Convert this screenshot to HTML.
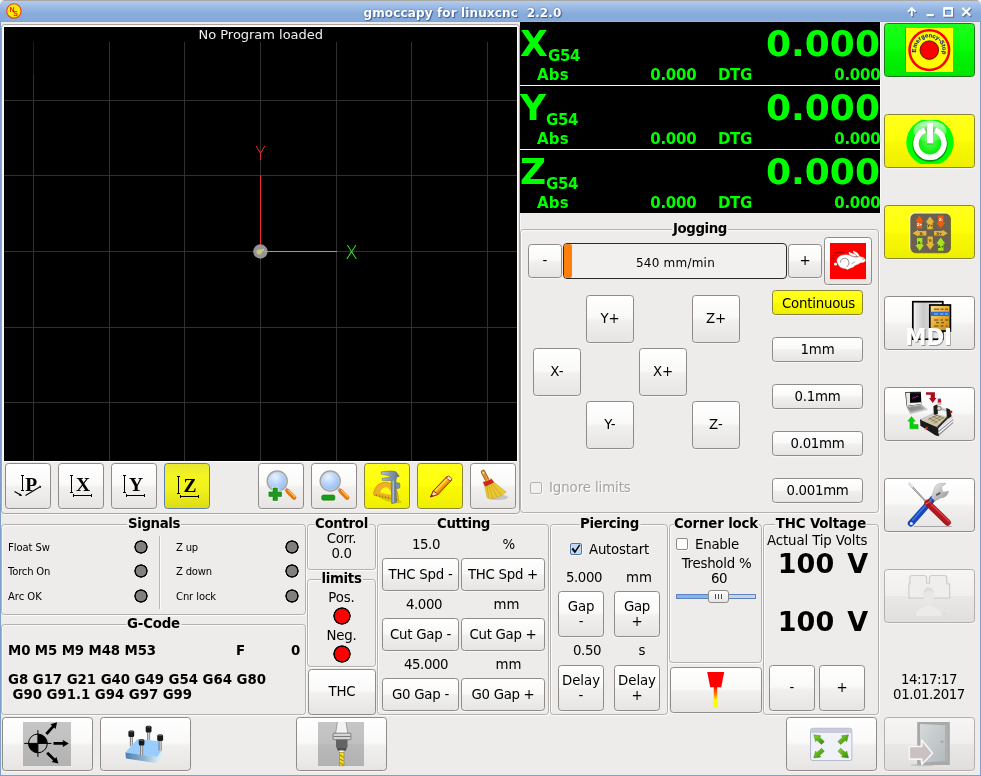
<!DOCTYPE html>
<html lang="en"><head><meta charset="utf-8"><title>gmoccapy for linuxcnc 2.2.0</title>
<style>
html,body{margin:0;padding:0}
body{width:981px;height:776px;background:#edeceb;position:relative;overflow:hidden;font-family:"DejaVu Sans","Liberation Sans",sans-serif;font-size:13.33px;letter-spacing:-.1px;color:#000;line-height:16px}
.a{position:absolute;white-space:nowrap}
.c{position:absolute;white-space:nowrap;text-align:center}
.b{position:absolute;box-sizing:border-box;border:1px solid #8f8b88;border-radius:3.5px;background:linear-gradient(#ffffff 0%,#f9f9f8 47%,#f1f0ef 53%,#e6e5e4 100%);box-shadow:0 1px 0 rgba(255,255,255,.6);display:flex;align-items:center;justify-content:center;text-align:center;white-space:nowrap}
.b.y{background:linear-gradient(#ffff1c 0%,#ffff0a 48%,#f9f906 54%,#eeee00 100%);border-color:#8a8637}
.b.g{background:linear-gradient(#1cff1c 0%,#08fc08 48%,#04f504 54%,#00e600 100%);border-color:#1c7a1c}
.b.d{background:linear-gradient(#f6f5f5 0%,#f0efee 49%,#e9e8e7 51%,#e0dfde 100%);border-color:#b3afac}
.f{position:absolute;box-sizing:border-box;border:1px solid #b3b0ad;border-radius:3.5px;box-shadow:inset 1px 1px 0 #fbfbfb,1px 1px 0 #fbfbfb}
.t{position:absolute;white-space:nowrap;font-weight:bold;background:#edeceb;height:16px;line-height:16px;top:516px;padding:0 1px;letter-spacing:-.33px;transform:translateX(-50%)}
.led{position:absolute;width:14px;height:14px;border-radius:50%;background:radial-gradient(circle at 50% 50%,#808080 0,#808080 4.900px,#000 5.600px,#000 6.400px,rgba(0,0,0,0) 7px)}
.led.r{width:18px;height:18px;background:radial-gradient(circle at 50% 50%,#ff0000 0,#ff0000 6.900px,#000 7.600px,#000 8.400px,rgba(0,0,0,0) 9px)}
.s{font-size:10px;letter-spacing:.06px}
.dro{letter-spacing:0;position:absolute;left:520px;width:360px;height:63px;background:#000;color:#00ff00;font-weight:bold;overflow:hidden}
.dro div{position:absolute;white-space:nowrap}
.dro .L{font-size:36px;line-height:42px;left:0;top:1px}
.dro .G{font-size:15px;line-height:18px;top:25px}
.dro .A{font-size:15px;line-height:18px;top:44px;left:17px}
.dro .V{font-size:15px;line-height:18px;top:44px;right:183.700px}
.dro .D{font-size:15px;line-height:18px;top:44px;left:198px}
.dro .W{font-size:15px;line-height:18px;top:44px;right:-.3px}
.dro .B{font-size:36px;line-height:42px;right:0px;top:1px}
svg{position:absolute;overflow:visible}
#w{position:absolute;left:0;top:0;width:981px;height:776px;will-change:transform}
</style></head><body><div id="w">
<!-- title bar -->
<div class="a" style="left:0;top:0;width:981px;height:776px;background:#7f9fcc"></div>
<div class="a" style="left:0;top:0;width:981px;height:6px;background:#f4f4f4"></div><div class="a" style="left:0;top:0;width:981px;height:22px;background:linear-gradient(#aaa6a2 0,#aaa6a2 1px,#b1ccee 1px,#a3c0e7 5px,#93b4e0 10px,#86aada 14.500px,#86aada 21px,#7ca3db 21px);border-radius:5px 5px 0 0"></div><div class="a" style="left:520px;top:21px;width:360px;height:1px;background:#8fb5ea"></div>
<div class="a" style="left:1px;top:22px;width:979px;height:753px;background:#edeceb"></div>
<svg style="left:5px;top:2px" width="18" height="18" viewBox="0 0 18 18"><circle cx="8.900" cy="8.900" r="7.200" fill="#ffee00" stroke="#f0401c" stroke-width="1.100"></circle><g font-family="Liberation Sans,sans-serif" font-weight="bold" fill="#f01414"><text x="4.500" y="10" font-size="7">N</text><text x="8.300" y="13.800" font-size="7">S</text></g></svg>
<div class="c nls" style="left:262.500px;top:5px;width:400px;font-weight:bold;font-size:12px;letter-spacing:.14px;color:#fff;text-shadow:1px 1px 1px #3f5f90,0 0 2px #5577a8;white-space:pre">gmoccapy for linuxcnc  2.2.0</div>
<svg style="left:905px;top:4px" width="72" height="16" viewBox="0 0 72 16" fill="none"><defs><g id="wc" stroke-width="1.900"><path d="M6.800 12.300V4.800M3 7.800L6.800 4L10.600 7.800"></path><path d="M21.500 11.200h7.300" stroke-width="2.200"></path><rect x="39.200" y="4.200" width="8" height="7.600"></rect><path d="M39.200 4.500h8" stroke-width="2.400"></path><path d="M57.300 3.800l8 8M65.300 3.800l-8 8" stroke-width="2.100"></path></g></defs><use href="#wc" stroke="#4c6c9e" transform="translate(1 1)"></use><use href="#wc" stroke="#fff"></use></svg>
<!-- preview frame -->
<div class="a" style="left:1px;top:24px;width:519px;height:490px;box-sizing:border-box;border:1px solid #a8a4a1;border-radius:3.500px;box-shadow:inset 1px 1px 0 #f6f5f4,1px 1px 0 #f8f8f7"></div><div class="a" style="left:3px;top:26px;width:515px;height:436px;background:#fff"></div>
<div class="a" style="left:4px;top:27px;width:513px;height:434px;background:#000"></div>
<svg style="left:4px;top:27px" width="513" height="434" viewBox="4 27 513 434" shape-rendering="crispEdges">
<g stroke="#303030" stroke-width="1" fill="none">
<path d="M33.5 42V461M109.5 42V461M184.5 42V461M260.5 42V461M336.5 42V461M411.5 42V461M487.5 42V461"></path>
<path d="M4 100.5H517M4 175.5H517M4 251.5H517M4 327.5H517M4 402.5H517"></path>
</g>
<path d="M33.5 42V75" stroke="#1c1c1c" fill="none"></path>
<g shape-rendering="auto" fill="none" stroke-width="1">
<path d="M260.5 175.5V251" stroke="#f02a2a"></path>
<text x="260.400" y="159.600" text-anchor="middle" font-family="DejaVu Sans Light,DejaVu Sans,Liberation Sans,sans-serif" font-weight="200" font-size="18.600" fill="#ff3030" transform="translate(260.400 0) scale(.92 1) translate(-260.400 0)">Y</text>
<path d="M261 251.5H337" stroke="#22ee22"></path>
<text x="351.400" y="259" text-anchor="middle" font-family="DejaVu Sans Light,DejaVu Sans,Liberation Sans,sans-serif" font-weight="200" font-size="20" fill="#28f828" transform="translate(351.400 0) scale(.92 1) translate(-351.400 0)">X</text>
<circle cx="260.4" cy="251.5" r="7.2" fill="#a0a0a0" fill-opacity="0.93" stroke="none"></circle>
<path d="M256.5 251.5c0-1.6 1.6-2 3-2l3.5-.6c1-.2 1.600.6 1 1.400l-1.800 1.200c-.3 2-1.200 3-3.200 3c-1.600 0-2.500-1.200-2.500-3z" fill="#c8c878" stroke="none"></path>
</g>
</svg>
<div class="c" style="left: 4px; top: 27px; width: 513.5px; color: rgb(240, 240, 240); line-height: 15px; font-size: 13px; letter-spacing: -0.02px;">No Program loaded</div>
<!-- toolbar under preview -->
<div class="b" style="left:5px;top:463px;width:46px;height:46px"><svg style="left:0;top:0" width="44" height="44" viewBox="6 464 44 44"><text x="25.200" y="491" font-family="Liberation Serif,serif" font-weight="bold" font-size="19.500" fill="#000">P</text><path d="M22.500 475.500V490.500M21 475.500h3M21 490.500h3" stroke="#000" stroke-width="1" fill="none"></path><path d="M14.500 491.500L21.500 495.500M25.500 495.500L40.500 486.500" stroke="#000" stroke-width="1.100" fill="none"></path><path d="M19.800 493.200l2.200 2.800l-3.200-.6zM39.200 485.500l2 .8l-.6 2z" fill="#000"></path></svg></div>
<div class="b" style="left:58px;top:463px;width:46px;height:46px"><svg style="left:0;top:0" width="44" height="44" viewBox="59 464 44 44"><text x="76" y="491" font-family="Liberation Serif,serif" font-weight="bold" font-size="19.500" fill="#000">X</text><path d="M71.500 475.500V492.500M70 475.500h3M70 492.500h3M73.500 495.500H91.500M73.500 494v3M91.500 494v3" stroke="#000" stroke-width="1" fill="none"></path></svg></div>
<div class="b" style="left:111px;top:463px;width:46px;height:46px"><svg style="left:0;top:0" width="44" height="44" viewBox="112 464 44 44"><text x="129" y="491" font-family="Liberation Serif,serif" font-weight="bold" font-size="19.500" fill="#000">Y</text><path d="M124.500 475.500V492.500M123 475.500h3M123 492.500h3M126.500 495.500H144.500M126.500 494v3M144.500 494v3" stroke="#000" stroke-width="1" fill="none"></path></svg></div>
<div class="b" style="left:164px;top:463px;width:46px;height:46px;background:linear-gradient(#e8e830 0%,#f4f420 30%,#f0f01c 60%,#dcdc14 100%);border-color:#5d7fb1"><svg style="left:0;top:0" width="44" height="44" viewBox="164 463 44 44"><text x="182.500" y="491" font-family="Liberation Serif,serif" font-weight="bold" font-size="19.500" fill="#000">Z</text><path d="M177.500 475.500V492.500M176 475.500h3M176 492.500h3M179.500 495.500H197.500M179.500 494v3M197.500 494v3" stroke="#000" stroke-width="1" fill="none"></path></svg></div>
<div class="b" style="left:258px;top:463px;width:46px;height:46px" id="zin"><svg style="left:0;top:0" width="44" height="44" viewBox="259 464 44 44"><defs><radialGradient id="lens" cx=".4" cy=".3" r=".8"><stop offset="0" stop-color="#e8f2ff"></stop><stop offset=".6" stop-color="#a9cbfb"></stop><stop offset="1" stop-color="#8ab6f6"></stop></radialGradient><linearGradient id="hnd" x1="0" y1="0" x2="1" y2="0" gradientTransform="rotate(-45 .5 .5)"><stop offset="0" stop-color="#ffc070"></stop><stop offset=".5" stop-color="#f58a1f"></stop><stop offset="1" stop-color="#d86a08"></stop></linearGradient></defs><path d="M285.4 488.8L288.2 491.6" stroke="#b0b0b0" stroke-width="3.400"></path><path d="M287.7 491.1L294.2 497.6" stroke="#e8760c" stroke-width="4.400" stroke-linecap="round"></path><path d="M288.4 490.4L294.8 496.8" stroke="#ffc46a" stroke-width="1.300" stroke-linecap="round"></path><circle cx="277.2" cy="481.0" r="9.900" fill="url(#lens)" stroke="#a2a2a2" stroke-width="1.700"></circle><circle cx="277.2" cy="481.0" r="9" fill="none" stroke="#d8d8d8" stroke-width=".6"></circle><path d="M273.0 487.9h4.400v4.100h4.100v4.400h-4.100v4.100h-4.400v-4.100h-4.100v-4.400h4.100z" fill="#1d9a1d" stroke="#eaf6e6" stroke-width="2.400" stroke-linejoin="round"></path><path d="M273.0 487.9h4.400v4.100h4.100v4.400h-4.100v4.100h-4.400v-4.100h-4.100v-4.400h4.100z" fill="#1d9a1d" stroke="#167a16" stroke-width=".6" stroke-linejoin="round"></path></svg></div>
<div class="b" style="left:311px;top:463px;width:46px;height:46px" id="zout"><svg style="left:0;top:0" width="44" height="44" viewBox="312 464 44 44"><path d="M338.4 488.8L341.2 491.6" stroke="#b0b0b0" stroke-width="3.400"></path><path d="M340.7 491.1L347.2 497.6" stroke="#e8760c" stroke-width="4.400" stroke-linecap="round"></path><path d="M341.4 490.4L347.8 496.8" stroke="#ffc46a" stroke-width="1.300" stroke-linecap="round"></path><circle cx="330.2" cy="481.0" r="9.900" fill="url(#lens)" stroke="#a2a2a2" stroke-width="1.700"></circle><circle cx="330.2" cy="481.0" r="9" fill="none" stroke="#d8d8d8" stroke-width=".6"></circle><rect x="321.7" y="495.0" width="13.200" height="5.200" rx="1.500" fill="#1d9a1d" stroke="#eaf6e6" stroke-width="2.200"></rect><rect x="321.7" y="495.0" width="13.200" height="5.200" rx="1.500" fill="#1d9a1d" stroke="#167a16" stroke-width=".6"></rect></svg></div>
<div class="b y" style="left:364px;top:463px;width:46px;height:46px" id="dim"><svg style="left:0;top:0" width="44" height="44" viewBox="365 464 44 44"><defs><linearGradient id="cal" x1="0" y1="0" x2="1" y2="0"><stop offset="0" stop-color="#b8c6d6"></stop><stop offset=".5" stop-color="#8598ae"></stop><stop offset="1" stop-color="#5f738c"></stop></linearGradient></defs><ellipse cx="390.5" cy="499.5" rx="11.500" ry="2.500" fill="#8a8a00" opacity=".35" transform="rotate(14 390.5 499.5)"></ellipse><path d="M373.6 493.1Q375.8 482.0 387.0 482.0Q397.2 485.5 398.4 497.7L398.1 500.4L374.0 495.3Z" fill="#eeb024" stroke="#c88a10" stroke-width=".7"></path><path d="M380.1 492.8Q381.3 487.3 386.6 487.3Q391.1 489.1 391.5 495.0Z" fill="#fafa10"></path><path d="M376.4 494.0v2M379.5 494.8v2M382.5 495.4v2M385.6 496.1v2M388.6 496.7v2M396.6 498.4v2" stroke="#8a5a08" stroke-width=".6"></path><polygon points="381.3,471.8 391.7,471.0 396.0,471.8 399.3,476.3 396.6,477.2 396.0,480.0 396.3,502.6 391.7,503.6 391.2,480.6 382.2,480.3 382.2,478.4 390.5,477.2 389.5,475.7 381.3,474.0" fill="url(#cal)" stroke="#5a6c82" stroke-width=".6"></polygon><path d="M393.2 480.6V502.4" stroke="#c9d4e0" stroke-width=".9"></path><rect x="395.4" y="482.8" width="4.500" height="5.600" rx="1.500" fill="#7d90a6" stroke="#5a6c82" stroke-width=".5"></rect></svg></div>
<div class="b y" style="left:417px;top:463px;width:46px;height:46px" id="pen"><svg style="left:0;top:0" width="44" height="44" viewBox="418 464 44 44"><polygon points="430.6,496.9 433.3,491.0 446.7,476.7 451.6,480.0 438.2,494.3" fill="#f9a70a" stroke="#a01414" stroke-width="1"></polygon><polygon points="430.6,496.9 433.3,491.0 438.2,494.3" fill="#f6dcae" stroke="#a01414" stroke-width=".8"></polygon><polygon points="430.6,496.9 431.6,494.8 433.3,495.7" fill="#3a1a1a"></polygon><path d="M435.1 491.0L448.6 477.5" stroke="#ffd24a" stroke-width="1.800"></path><path d="M437.6 493.4L450.8 480.0" stroke="#e07a00" stroke-width="1.200"></path><ellipse cx="449.3" cy="478.4" rx="2.800" ry="1.700" transform="rotate(35 449.3 478.4)" fill="#f4e8e0" stroke="#a01414" stroke-width=".7"></ellipse></svg></div>
<div class="b" style="left:470px;top:463px;width:46px;height:46px" id="broom"><svg style="left:0;top:0" width="44" height="44" viewBox="471 464 44 44"><ellipse cx="497.5" cy="497.2" rx="10.500" ry="2.800" fill="#000" opacity=".16"></ellipse><polygon points="484.6,485.5 492.8,481.3 506.1,492.0 501.2,495.7 496.3,497.5 491.4,499.0 487.1,497.7" fill="#e9c834" stroke="#c8a018" stroke-width=".5"></polygon><path d="M487.1 485.9L488.7 497.5M488.7 485.0L492.6 498.1M490.2 484.0L496.9 496.9M491.4 483.1L501.2 495.0" stroke="#b89010" stroke-width=".6" opacity=".8"></path><path d="M483.1 472.0L487.7 481.0" stroke="#a86a18" stroke-width="4.600" stroke-linecap="round"></path><path d="M483.1 472.0L487.7 481.0" stroke="#d89a40" stroke-width="2.600" stroke-linecap="round"></path><circle cx="483.4" cy="472.8" r=".9" fill="#f4f0e8"></circle><polygon points="483.1,482.2 491.4,478.9 493.6,482.2 485.3,486.2" fill="#d82020" stroke="#a81010" stroke-width=".5"></polygon><path d="M482.8 482.0L491.4 478.7" stroke="#f0c030" stroke-width=".9"></path></svg></div>
<!-- DRO -->
<div class="a" style="left:520px;top:22px;width:361px;height:191px;background:#f4f4f4"></div>
<div class="dro" style="top:22px"><div class="L" style="letter-spacing: 0.244px;">X</div><div class="G" style="left: 28px; letter-spacing: -0.395px;">G54</div><div class="A" style="letter-spacing: 0.242px;">Abs</div><div class="V" style="letter-spacing: -0.289px;">0.000</div><div class="D" style="letter-spacing: -0.332px;">DTG</div><div class="W" style="letter-spacing: -0.289px;">0.000</div><div class="B" style="letter-spacing: 0.026px;">0.000</div></div>
<div class="dro" style="top:86px"><div class="L" style="letter-spacing: -0.068px;">Y</div><div class="G" style="left: 26px; letter-spacing: -0.395px;">G54</div><div class="A" style="letter-spacing: 0.242px;">Abs</div><div class="V" style="letter-spacing: -0.289px;">0.000</div><div class="D" style="letter-spacing: -0.332px;">DTG</div><div class="W" style="letter-spacing: -0.289px;">0.000</div><div class="B" style="letter-spacing: 0.026px;">0.000</div></div>
<div class="dro" style="top:150px"><div class="L" style="letter-spacing: -0.104px;">Z</div><div class="G" style="left: 26px; letter-spacing: -0.395px;">G54</div><div class="A" style="letter-spacing: 0.242px;">Abs</div><div class="V" style="letter-spacing: -0.289px;">0.000</div><div class="D" style="letter-spacing: -0.332px;">DTG</div><div class="W" style="letter-spacing: -0.289px;">0.000</div><div class="B" style="letter-spacing: 0.026px;">0.000</div></div>
<!-- Jogging -->
<div class="f" style="left:520px;top:229px;width:359px;height:284px"></div>
<div class="t" style="left: 700px; top: 221px; letter-spacing: -0.4px;">Jogging</div>
<div class="b" style="left: 528px; top: 244px; width: 34px; height: 34px; letter-spacing: 0.19px;">-</div>
<div class="a" style="left:563px;top:243px;width:224px;height:36px;box-sizing:border-box;border:1px solid #2a2a2a;border-radius:4px;background:#f1f0ef;overflow:hidden"><div class="a" style="left:0;top:0;width:8px;height:34px;background:#ff7f0e;border-radius:3px 2px 2px 3px"></div></div>
<div class="c" style="left: 563.5px; top: 255px; width: 224px; font-size: 12px; letter-spacing: 0.223px;">540 mm/min</div>
<div class="b" style="left: 788px; top: 244px; width: 34px; height: 34px; letter-spacing: -0.169px;">+</div>
<div class="b" style="left:824px;top:237px;width:48px;height:48px" id="rabbit"><svg style="left:0;top:0" width="46" height="46" viewBox="825 238 46 46"><rect x="830" y="243" width="36" height="36" fill="#ff0000"></rect><path d="M834.3 253.0Q839.7 252.3 844.8 252.8M831.4 256.1Q835.1 255.3 838.2 255.7M830.7 259.1Q832.8 258.6 834.7 258.4" stroke="#8a0000" stroke-width=".9" fill="none" opacity=".85"></path><path d="M837.0 260.9Q837.4 255.5 844.4 254.9Q849.0 254.6 852.1 256.7Q856.7 257.8 859.4 256.7Q864.5 256.7 865.6 260.5Q864.5 262.8 860.6 262.5Q858.3 264.4 855.2 265.2Q853.6 267.5 850.5 267.9L847.5 269.4L845.5 268.6L842.0 268.0Q838.2 266.3 837.0 260.9Z" fill="#fff" stroke="#e8f4f4" stroke-width=".5"></path><ellipse cx="835.5" cy="264.0" rx="1.700" ry="1.500" fill="#fff"></ellipse><path d="M852.1 256.7Q847.5 253.2 849.0 252.0Q853.6 253.2 856.7 256.7Z" fill="#fff"></path><path d="M855.2 256.3Q852.1 251.6 853.6 250.7Q858.3 252.4 859.7 256.7Z" fill="#fff"></path><path d="M840.5 262.5Q840.1 258.6 845.1 258.2Q849.0 259.0 849.0 262.5Q848.6 265.5 846.7 267.1" stroke="#3a3a3a" stroke-width=".55" fill="none"></path><path d="M850.5 255.5Q853.6 257.0 858.3 256.7M852.9 252.4L857.5 256.3M851.3 264.0L855.2 261.7" stroke="#555" stroke-width=".5" fill="none"></path><circle cx="863.1" cy="259.0" r=".6" fill="#444"></circle></svg></div>
<div class="b" style="left: 586px; top: 295px; width: 48px; height: 48px; letter-spacing: -0.156px;">Y+</div>
<div class="b" style="left: 692px; top: 295px; width: 48px; height: 48px; letter-spacing: -0.15px;">Z+</div>
<div class="b" style="left: 533px; top: 348px; width: 48px; height: 48px; letter-spacing: 0.029px;">X-</div>
<div class="b" style="left: 639px; top: 348px; width: 48px; height: 48px; letter-spacing: -0.15px;">X+</div>
<div class="b" style="left: 586px; top: 401px; width: 48px; height: 48px; letter-spacing: 0.024px;">Y-</div>
<div class="b" style="left: 692px; top: 401px; width: 48px; height: 48px; letter-spacing: 0.029px;">Z-</div>
<div class="b y" style="left: 772px; top: 290px; width: 91px; height: 25px; padding: 2px 0px 0px 2px; letter-spacing: -0.229px;">Continuous</div>
<div class="b" style="left: 772px; top: 337px; width: 91px; height: 25px; letter-spacing: -0.15px;">1mm</div>
<div class="b" style="left: 772px; top: 384px; width: 91px; height: 25px; letter-spacing: -0.234px;">0.1mm</div>
<div class="b" style="left: 772px; top: 431px; width: 91px; height: 25px; letter-spacing: -0.275px;">0.01mm</div>
<div class="b" style="left: 772px; top: 478px; width: 91px; height: 25px; letter-spacing: -0.304px;">0.001mm</div>
<div class="a" style="left:530px;top:482px;width:12px;height:12px;box-sizing:border-box;border:1px solid #b5b2af;border-radius:2px;background:#f1f0ef;box-shadow:1px 1px 0 #fbfbfb"></div>
<div class="a" style="left: 549px; top: 480px; color: rgb(166, 164, 161); text-shadow: rgb(255, 255, 255) 1px 1px 0px; letter-spacing: -0.091px;">Ignore limits</div>
<!-- right column -->
<div class="a" style="left:880px;top:22px;width:1px;height:191px;background:#fbfbfb"></div>
<div class="b g" style="left:884px;top:23px;width:91px;height:54px" id="estop"><svg style="left:0;top:0" width="89" height="52" viewBox="885 24 89 52"><rect x="905" y="28" width="48" height="44" fill="#ffff00"></rect><rect x="905" y="28" width="0.8" height="44" fill="#6b6b00"></rect><circle cx="929.3" cy="50.1" r="19.8" fill="none" stroke="#ff0000" stroke-width="2.5"></circle><circle cx="929.3" cy="50.1" r="9.3" fill="#ff0000" stroke="#200000" stroke-width="0.7"></circle><path id="esp" d="M916.1 52.3A13.300 13.300 0 1 1 942.4 52.8" fill="none"></path><text font-family="Liberation Sans,sans-serif" font-weight="bold" font-size="5.800" fill="#1c1c8c" letter-spacing="0.05" stroke="#1c1c8c" stroke-width=".15"><textPath href="#esp">Emergency-Stop</textPath></text></svg></div>
<div class="b y" style="left:884px;top:114px;width:91px;height:54px" id="power"><svg style="left:0;top:0" width="89" height="52" viewBox="885 115 89 52"><defs><clipPath id="pc"><rect x="900" y="120" width="60" height="44"></rect></clipPath><radialGradient id="pg" cx="0.5" cy="0.45" r="0.6"><stop offset="0" stop-color="#5cff5c"></stop><stop offset="1" stop-color="#00e800"></stop></radialGradient><linearGradient id="pgl" x1="0" y1="0" x2="0" y2="1"><stop offset="0" stop-color="#fff" stop-opacity=".75"></stop><stop offset="1" stop-color="#fff" stop-opacity=".15"></stop></linearGradient></defs><g clip-path="url(#pc)"><circle cx="930" cy="142.200" r="23.700" fill="#00ff00"></circle><circle cx="930" cy="144.200" r="14.600" fill="none" stroke="#0a7a0a" stroke-width="6" opacity=".8"></circle><circle cx="930" cy="143" r="11" fill="url(#pg)"></circle><ellipse cx="930" cy="131" rx="16.500" ry="10.500" fill="url(#pgl)"></ellipse><path d="M935 130.200A14 14 0 1 1 925 130.200" fill="none" stroke="#fff" stroke-width="5.600"></path><rect x="927" y="123" width="6" height="20.500" fill="#fff"></rect><rect x="927" y="143.500" width="6" height="1" fill="#0a900a" opacity=".6"></rect></g></svg></div>
<div class="b y" style="left:884px;top:205px;width:91px;height:54px" id="jogico"><svg style="left:0;top:0" width="89" height="52" viewBox="885 206 89 52"><rect x="910.4" y="213.800" width="40.600" height="39.400" rx="5.500" fill="#2e2a20" opacity=".6"></rect><rect x="909.3" y="212.400" width="40.600" height="39.600" rx="5.500" fill="#fdfde8"></rect><rect x="910.3" y="213.500" width="40.100" height="39.100" rx="5" fill="#6a614e"></rect><path d="M919.4 215.4L923.6 221.2H922.0V228.2H916.8V221.2H915.2Z" fill="#ea5c12"></path><path d="M930.0 216.6L934.4 222.3H932.7V229.2H927.3V222.3H925.6Z" fill="#e4b43c"></path><path d="M940.8 228.6L945.2 222.7H943.5V215.4H938.1V222.7H936.4Z" fill="#ea5c12"></path><path d="M912.6 233.2L918.1 229.8V231.0H926.4V235.4H918.1V236.6Z" fill="#e4b43c"></path><path d="M947.8 233.2L942.3 229.8V231.0H934.0V235.4H942.3V236.6Z" fill="#e4b43c"></path><path d="M919.7 250.9L924.0 245.1H922.4V238.0H917.0V245.1H915.4Z" fill="#a8e220"></path><path d="M930.2 249.8L934.4 243.9H932.8V236.6H927.6V243.9H926.0Z" fill="#e4b43c"></path><path d="M940.8 237.6L945.2 243.5H943.5V250.8H938.1V243.5H936.4Z" fill="#a8e220"></path><g font-family="DejaVu Sans,Liberation Sans,sans-serif" font-weight="bold" font-size="3.800" text-anchor="middle"><text x="919.6" y="225.800" fill="#fff">Z+</text><text x="940.8" y="221.300" fill="#fff">Z-</text><text x="930" y="226.800" fill="#4a3a10">Y+</text><text x="921.4" y="234.500" fill="#4a3a10">X-</text><text x="939.2" y="234.500" fill="#4a3a10">X+</text><text x="930.2" y="242.300" fill="#4a3a10">Y-</text><text x="919.7" y="243.800" fill="#2c4a00">A-</text><text x="940.8" y="247.800" fill="#2c4a00">A+</text></g></svg></div>
<div class="b" style="left:884px;top:296px;width:91px;height:54px" id="mdi"><svg style="left:0;top:0" width="89" height="52" viewBox="885 297 89 52"><defs><linearGradient id="mg1" x1="0" y1="0" x2="1" y2="0"><stop offset="0" stop-color="#f4f4f4"></stop><stop offset=".35" stop-color="#c9c9c9"></stop><stop offset=".6" stop-color="#d8d8d8"></stop><stop offset="1" stop-color="#f2f2f2"></stop></linearGradient><linearGradient id="mg2" x1="0" y1="0" x2="1" y2="1"><stop offset="0" stop-color="#fbe39a"></stop><stop offset=".5" stop-color="#e9ab35"></stop><stop offset="1" stop-color="#c78a1c"></stop></linearGradient></defs>
<rect x="912.800" y="301.700" width="30" height="37.500" fill="url(#mg1)" stroke="#000" stroke-width="1.700"></rect>
<rect x="929.800" y="305" width="20.600" height="26" fill="url(#mg2)" stroke="#000" stroke-width="1.700"></rect>
<rect x="930.600" y="311.700" width="19" height="4.300" fill="#2b6fd0"></rect>
<g stroke="#4a3508" stroke-width="1" opacity=".85"><path d="M934 309.200h5M940.500 309.200h3M945 309.200h3M934 320h4.500M940.500 320h2.500M945 320h3.500M936 322.700h3M941 322.700h3M934 326h4.500M940.500 326h3M945.500 326h2"></path></g>
<g stroke="#cfe0ff" stroke-width=".9" opacity=".8"><path d="M934 314h4M940 314h3.500M945 314h3"></path></g>
<g font-family="DejaVu Sans,Liberation Sans,sans-serif" font-weight="bold" font-size="22.500"><text x="906.2" y="345.700" fill="#555" opacity=".55" textLength="46.500" lengthAdjust="spacingAndGlyphs">MDI</text><text x="905.3" y="344.700" fill="#fff" textLength="46.500" lengthAdjust="spacingAndGlyphs">MDI</text></g></svg></div>
<div class="b" style="left:884px;top:387px;width:91px;height:54px" id="auto"><svg style="left:0;top:0" width="89" height="52" viewBox="885 388 89 52"><defs><linearGradient id="ag1" x1="0" y1="0" x2="1" y2="1"><stop offset="0" stop-color="#8a8a8a"></stop><stop offset=".5" stop-color="#b4b4b4"></stop><stop offset="1" stop-color="#e4e4e4"></stop></linearGradient><linearGradient id="ag2" x1="0" y1="0" x2="0" y2="1"><stop offset="0" stop-color="#8e8e90"></stop><stop offset=".25" stop-color="#f4f4f6"></stop><stop offset=".5" stop-color="#a8a8ac"></stop><stop offset=".75" stop-color="#eeeeF0"></stop><stop offset="1" stop-color="#77777a"></stop></linearGradient></defs><polygon points="905.1,392.0 920.9,391.8 921.4,404.2 906.7,406.6" fill="#242424"></polygon><polygon points="905.9,392.8 910.1,392.7 910.2,405.6 907.1,406.0" fill="#efe6e2"></polygon><polygon points="910.1,402.4 921.0,401.9 921.2,404.1 910.2,405.6" fill="#f2f0f0"></polygon><polygon points="910.1,393.6 920.8,393.4 921.0,402.2 910.2,402.7" fill="#030303"></polygon><path d="M912.4 398.7l1.500-1.800l1.600.6l1.500-1.600l1.200.9" stroke="#b420b4" stroke-width=".9" fill="none"></path><polygon points="906.7,407.0 921.4,404.6 928.0,409.6 910.2,414.0" fill="url(#ag1)"></polygon><polygon points="908.4,408.1 920.1,406.1 924.1,408.9 911.1,411.5" fill="#6e6e6e" opacity=".45"></polygon><polygon points="910.2,414.0 928.0,409.6 928.0,410.1 910.2,414.5" fill="#d8d8d8" opacity=".9"></polygon><polygon points="926.0,392.2 934.9,392.2 934.9,398.1 936.5,398.1 932.7,403.1 929.0,398.1 930.7,398.1 930.7,394.8 926.0,394.8" fill="#b00a18"></polygon><polygon points="911.5,416.5 915.3,421.2 913.3,421.2 913.3,424.5 918.1,424.5 918.1,428.8 909.9,428.8 909.9,421.2 907.8,421.2" fill="#00d400" stroke="#0c9a0c" stroke-width=".4"></polygon><polygon points="920.1,419.0 934.9,412.3 936.2,413.8 922.1,420.8" fill="#c9c9cc"></polygon><polygon points="922.3,420.7 936.2,413.9 946.9,416.7 936.7,426.9" fill="#cfc3a0"></polygon><path d="M928.2 419.5L937.5 415.1M930.8 421.5L940.9 416.5M933.5 423.5L943.6 417.5M928.8 417.8L937.5 422.9M932.2 416.2L940.9 420.2M935.5 414.8L943.6 418.2" stroke="#4a4538" stroke-width=".5" fill="none" opacity=".85"></path><polygon points="920.0,419.0 922.3,420.7 936.7,426.9 938.5,428.2 938.9,436.1 934.9,434.9 920.4,425.7" fill="#1a1a1a"></polygon><polygon points="938.5,428.2 953.1,416.7 953.1,423.2 938.9,436.1" fill="#b9b9bd"></polygon><path d="M938.7 429.9L953.1 418.3M938.7 433.0L953.1 421.0" stroke="#f6f6f8" stroke-width="1.300"></path><path d="M938.7 431.4L953.1 419.6M938.7 434.9L953.1 422.5" stroke="#77777c" stroke-width=".7"></path><polygon points="936.7,426.9 946.9,416.7 949.9,416.7 938.5,428.2" fill="#2a2a2a"></polygon><polygon points="938.5,428.2 949.9,416.7 953.1,416.7 940.2,428.6" fill="#dcdcdf"></polygon><polygon points="934.9,433.6 938.9,434.9 938.9,436.3 934.9,435.1" fill="#1a1a1a"></polygon><polygon points="933.4,406.2 936.5,404.6 937.7,405.6 937.9,413.8 934.9,414.9 933.8,413.8" fill="#1c1c1c"></polygon><polygon points="940.2,407.1 948.6,409.3 948.6,412.3 940.2,410.5" fill="#d4d6da"></polygon><polygon points="940.2,408.4 948.6,410.7 948.6,411.1 940.2,408.9" fill="#8e9094"></polygon><polygon points="946.2,408.1 949.7,409.3 951.7,416.2 948.4,418.5 946.8,416.5" fill="#1c1c1c"></polygon><polygon points="937.4,402.1 941.4,402.1 941.4,405.3 937.4,405.3" fill="#c4c4c6"></polygon><polygon points="937.8,399.1 941.0,399.1 941.2,402.4 937.7,402.4" fill="#cc1420"></polygon><ellipse cx="939.4" cy="398.7" rx="1.500" ry=".6" fill="#9a9a9a"></ellipse><circle cx="939.1" cy="408.4" r="2.100" fill="#e2dcc0" stroke="#3a3a3a" stroke-width=".6"></circle><circle cx="951.1" cy="411.9" r="1.300" fill="#cc1420"></circle><circle cx="926.9" cy="427.9" r="1.300" fill="#cc1420"></circle><circle cx="925.3" cy="428.9" r=".9" fill="#aaa"></circle></svg></div>
<div class="b" style="left:884px;top:478px;width:91px;height:54px" id="tools"><svg style="left:0;top:0" width="89" height="52" viewBox="885 479 89 52"><defs><linearGradient id="tg1" x1="0" y1="0" x2="1" y2="1"><stop offset="0" stop-color="#f4f4f4"></stop><stop offset="1" stop-color="#8e8e8e"></stop></linearGradient></defs><path d="M914.0 526.5L951.6 526.5" stroke="#777" stroke-width=".8" opacity=".7"></path><path d="M909.7 484.3L926.9 502.5" stroke="#7a7a7a" stroke-width="1.800" stroke-linecap="round"></path><path d="M909.3 483.7L911.9 486.3" stroke="#e0e0e0" stroke-width="2.600" stroke-linecap="round"></path><path d="M910.9 485.7L926.6 502.3" stroke="#e8e8e8" stroke-width=".7"></path><path d="M910.9 523.4L932.8 498.7" stroke="#1648b8" stroke-width="6.200" stroke-linecap="round"></path><path d="M912.8 520.0L932.0 498.1" stroke="#4a80e8" stroke-width="1.600" stroke-linecap="round" opacity=".8"></path><circle cx="911.4" cy="523.4" r="1.500" fill="#e8f0ff"></circle><path d="M931.5 497.4L934.4 488.1C935.1 484.5 939.8 482.4 946.0 483.5L941.3 487.1L942.9 492.2L948.5 491.2C948.0 494.8 944.9 497.9 940.8 497.9L935.1 501.0Z" fill="url(#tg1)" stroke="#9a9a9a" stroke-width=".4"></path><path d="M936.2 495.3L940.3 492.7" stroke="#555" stroke-width="1.600"></path><path d="M927.6 503.0L947.5 522.4" stroke="#b01820" stroke-width="6.600" stroke-linecap="round"></path><path d="M930.5 503.6L949.3 521.6" stroke="#e04048" stroke-width="1.500" stroke-linecap="round" opacity=".85"></path><path d="M925.3 504.1L931.5 500.8" stroke="#e8a0a0" stroke-width=".8" opacity=".8"></path><path d="M926.4 506.6L933.6 502.5" stroke="#7a0c12" stroke-width=".8" opacity=".7"></path></svg></div>
<div class="b d" style="left:884px;top:569px;width:91px;height:54px" id="user"><svg style="left:0;top:0" width="89" height="52" viewBox="885 570 89 52"><path d="M908.9 598.2V583.8H909.9V577.6Q909.9 575.5 911.9 575.5H924.3Q926.6 575.5 926.6 577.8V583.2H929.5V577.8Q929.5 575.5 931.7 575.5H944.4Q946.8 575.5 946.8 577.8V583.8H949.6V598.2Z" fill="#efeeed" stroke="#cfcdcb" stroke-width="1.200" stroke-linejoin="round"></path><path d="M916.1 615.9Q915.6 608.5 925.3 606.4L928.6 604.4L932.0 606.4Q941.8 608.5 941.4 615.9Z" fill="#ecebea"></path><ellipse cx="928.6" cy="595.6" rx="5.500" ry="8" fill="#e9e8e7"></ellipse><path d="M923.3 593.0Q923.8 587.4 928.6 587.4Q933.6 587.9 933.9 593.6Q931.5 589.9 928.4 591.2Q925.3 590.8 923.3 593.0Z" fill="#dddcdb"></path><path d="M944.4 609.0h1.500M944.9 613.7h1.500M945.1 616.7h1" stroke="#d5d3d1" stroke-width=".8"></path></svg></div>
<div class="c" style="left: 879px; top: 672px; width: 100px; line-height: 15px; letter-spacing: -0.455px;">14:17:17<br>01.01.2017</div>
<!-- Signals -->
<div class="f" style="left:1px;top:524px;width:305px;height:91px"></div>
<div class="t" style="left: 154px; letter-spacing: -0.386px;">Signals</div>
<div class="a s" style="left: 8px; top: 540px; letter-spacing: -0.05px;">Float Sw</div>
<div class="a s" style="left: 8px; top: 564px; letter-spacing: -0.195px;">Torch On</div>
<div class="a s" style="left: 8px; top: 589px; letter-spacing: -0.01px;">Arc OK</div>
<div class="led" style="left:134px;top:540px"></div>
<div class="led" style="left:134px;top:564px"></div>
<div class="led" style="left:134px;top:589px"></div>
<div class="a" style="left:159px;top:536px;width:1px;height:73px;background:#b9b6b3;box-shadow:1px 0 0 #fbfbfb"></div>
<div class="a s" style="left: 176px; top: 540px; letter-spacing: -0.179px;">Z up</div>
<div class="a s" style="left: 176px; top: 564px; letter-spacing: -0.169px;">Z down</div>
<div class="a s" style="left: 176px; top: 589px; letter-spacing: -0.099px;">Cnr lock</div>
<div class="led" style="left:285px;top:540px"></div>
<div class="led" style="left:285px;top:564px"></div>
<div class="led" style="left:285px;top:589px"></div>
<!-- G-Code -->
<div class="f" style="left:1px;top:624px;width:305px;height:91px"></div>
<div class="t" style="left: 153.5px; top: 616px; letter-spacing: -0.166px;">G-Code</div>
<div class="a" style="left: 8px; top: 643px; font-weight: bold; letter-spacing: -0.113px;">M0 M5 M9 M48 M53</div>
<div class="a" style="left: 236px; top: 643px; font-weight: bold; letter-spacing: -0.106px;">F</div>
<div class="a" style="right: 681px; top: 643px; font-weight: bold; letter-spacing: -0.275px;">0</div>
<div class="a" style="left: 8px; top: 672px; font-weight: bold; letter-spacing: -0.041px; line-height: 15px; white-space: pre;">G8 G17 G21 G40 G49 G54 G64 G80
 G90 G91.1 G94 G97 G99</div>
<!-- Control / limits -->
<div class="f" style="left:307px;top:524px;width:69px;height:46px"></div>
<div class="t" style="left: 341.5px; letter-spacing: -0.3px;">Control</div>
<div class="c" style="left: 307px; top: 531px; width: 69px; line-height: 15px; letter-spacing: -0.358px;">Corr.<br>0.0</div>
<div class="f" style="left:307px;top:579px;width:69px;height:88px"></div>
<div class="t" style="left: 341.5px; top: 571px; letter-spacing: -0.317px;">limits</div>
<div class="c" style="left: 307px; top: 590px; width: 69px; letter-spacing: -0.094px;">Pos.</div>
<div class="led r" style="left:333px;top:607px"></div>
<div class="c" style="left: 307px; top: 628px; width: 69px; letter-spacing: -0.218px;">Neg.</div>
<div class="led r" style="left:333px;top:645px"></div>
<div class="b" style="left: 308px; top: 669px; width: 68px; height: 46px; letter-spacing: -0.158px;">THC</div>
<!-- Cutting -->
<div class="f" style="left:377px;top:524px;width:172px;height:191px"></div>
<div class="t" style="left: 463.5px; letter-spacing: -0.374px;">Cutting</div>
<div class="c" style="left: 382px; top: 537px; width: 88px; letter-spacing: -0.42px;">15.0</div>
<div class="c" style="left: 470px; top: 537px; width: 77px; letter-spacing: -0.666px;">%</div>
<div class="b" style="left: 382px; top: 558px; width: 77px; height: 33px; letter-spacing: -0.238px;">THC Spd -</div>
<div class="b" style="left: 461px; top: 558px; width: 84px; height: 33px; letter-spacing: -0.278px;">THC Spd +</div>
<div class="c" style="left: 380px; top: 597px; width: 88px; letter-spacing: -0.432px;">4.000</div>
<div class="c" style="left: 468px; top: 597px; width: 77px; letter-spacing: 0.015px;">mm</div>
<div class="b" style="left: 382px; top: 618px; width: 77px; height: 33px; letter-spacing: -0.247px;">Cut Gap -</div>
<div class="b" style="left: 461px; top: 618px; width: 84px; height: 33px; letter-spacing: -0.287px;">Cut Gap +</div>
<div class="c" style="left: 382px; top: 657px; width: 88px; letter-spacing: -0.44px;">45.000</div>
<div class="c" style="left: 470px; top: 657px; width: 77px; letter-spacing: 0.015px;">mm</div>
<div class="b" style="left: 382px; top: 678px; width: 77px; height: 33px; letter-spacing: -0.257px;">G0 Gap -</div>
<div class="b" style="left: 461px; top: 678px; width: 84px; height: 33px; letter-spacing: -0.302px;">G0 Gap +</div>
<!-- Piercing -->
<div class="f" style="left:550px;top:524px;width:118px;height:191px"></div>
<div class="t" style="left: 609.5px; letter-spacing: -0.307px;">Piercing</div>
<div class="a" style="left:570px;top:543px;width:12px;height:12px;box-sizing:border-box;border:1px solid #4f76ab;border-radius:2px;background:#c6d8f0;box-shadow:1px 1px 0 #fbfbfb"><svg style="left:0;top:0" width="10" height="10" viewBox="571 544 10 10"><path d="M572.200 548.700L574.900 552.200L579.700 544.900" stroke="#0a0a0a" stroke-width="1.500" fill="none"></path><path d="M572 548.300l1.200-.5l2 2.600l-.5 1.700z" fill="#0a0a0a"></path></svg></div>
<div class="a" style="left: 589px; top: 542px; letter-spacing: -0.222px;">Autostart</div>
<div class="c" style="left: 554px; top: 570px; width: 60px; letter-spacing: -0.432px;">5.000</div>
<div class="c" style="left: 614px; top: 570px; width: 50px; letter-spacing: 0.015px;">mm</div>
<div class="b" style="left: 558px; top: 591px; width: 46px; height: 46px; white-space: normal; line-height: 15px; letter-spacing: -0.192px;">Gap<br>-</div>
<div class="b" style="left: 614px; top: 591px; width: 46px; height: 46px; white-space: normal; line-height: 15px; letter-spacing: -0.282px;">Gap<br>+</div>
<div class="c" style="left: 557px; top: 643px; width: 60px; letter-spacing: -0.42px;">0.50</div>
<div class="c" style="left: 617px; top: 643px; width: 50px; letter-spacing: 0.055px;">s</div>
<div class="b" style="left: 558px; top: 665px; width: 46px; height: 46px; white-space: normal; line-height: 15px; letter-spacing: -0.006px;">Delay<br>-</div>
<div class="b" style="left: 614px; top: 665px; width: 46px; height: 46px; white-space: normal; line-height: 15px; letter-spacing: -0.066px;">Delay<br>+</div>
<!-- Corner lock -->
<div class="f" style="left:669px;top:524px;width:93px;height:139px"></div>
<div class="t" style="left: 716px; padding: 0px; letter-spacing: -0.159px;">Corner lock</div>
<div class="a" style="left:676px;top:538px;width:12px;height:12px;box-sizing:border-box;border:1px solid #8f8b88;border-radius:2px;background:#fff;box-shadow:1px 1px 0 #fbfbfb"></div>
<div class="a" style="left: 695px; top: 537px; letter-spacing: -0.234px;">Enable</div>
<div class="c" style="left: 671px; top: 556px; width: 91px; line-height: 15px; letter-spacing: -0.244px;">Treshold %</div><div class="c" style="left: 673.5px; top: 571px; width: 91px; line-height: 15px; letter-spacing: -0.481px;">60</div>
<div class="a" style="left:676px;top:594px;width:80px;height:5px;box-sizing:border-box;border:1px solid #5a84c2;border-radius:.5px;background:linear-gradient(to right,#8db1e4 0,#8db1e4 42px,#ccd3dc 42px)"></div>
<div class="a" style="left:708px;top:590px;width:21px;height:13px;box-sizing:border-box;border:1px solid #8f8b88;border-radius:3px;background:linear-gradient(#fff,#e6e5e4)"><div class="a" style="left:6px;top:3px;width:1px;height:5px;background:#4a4a4a;box-shadow:3px 0 0 #4a4a4a,6px 0 0 #4a4a4a"></div></div>
<div class="b" style="left:670px;top:667px;width:92px;height:46px" id="torch"><svg style="left:0;top:0" width="90" height="44" viewBox="671 668 90 44"><defs><linearGradient id="fl" x1="0" y1="0" x2="0" y2="1"><stop offset="0" stop-color="#f01400"></stop><stop offset=".45" stop-color="#ff6a00"></stop><stop offset="1" stop-color="#ffe000"></stop></linearGradient></defs><path d="M713 687h5v21h-5z" fill="#ffff00"></path><path d="M714 687h3q.6 7 -.3 11.500q-1.200 2.500 -2.400 0q-.9 -4.500 -.3 -11.500z" fill="url(#fl)"></path><path d="M707.200 672h17l-3 15.200h-11z" fill="#ff0000"></path></svg></div>
<!-- THC Voltage -->
<div class="f" style="left:763px;top:524px;width:116px;height:191px"></div>
<div class="t" style="left: 821px; letter-spacing: -0.151px;">THC Voltage</div>
<div class="a" style="left: 767px; top: 533px; letter-spacing: -0.12px;">Actual Tip Volts</div>
<div class="a" style="left: 777.7px; top: 548px; font-weight: bold; font-size: 27px; line-height: 32px; word-spacing: 3.5px; letter-spacing: 0.069px;">100 V</div>
<div class="a" style="left: 777.7px; top: 606px; font-weight: bold; font-size: 27px; line-height: 32px; word-spacing: 3.5px; letter-spacing: 0.069px;">100 V</div>
<div class="b" style="left: 769px; top: 665px; width: 46px; height: 46px; letter-spacing: 0.19px;">-</div>
<div class="b" style="left: 819px; top: 665px; width: 46px; height: 46px; letter-spacing: -0.169px;">+</div>
<!-- bottom row -->
<div class="b" style="left:2px;top:717px;width:91px;height:54px" id="home"><svg style="left:0;top:0" width="89" height="52" viewBox="3 718 89 52"><defs><linearGradient id="gq" x1="0" y1="0" x2="0" y2="1"><stop offset="0" stop-color="#c6c6c6"></stop><stop offset=".49" stop-color="#c0c0c0"></stop><stop offset=".51" stop-color="#b9b9b9"></stop><stop offset="1" stop-color="#b2b2b2"></stop></linearGradient></defs><rect x="23" y="722" width="48" height="44" fill="url(#gq)"></rect><circle cx="37.9" cy="743.4" r="9.400" fill="none" stroke="#000" stroke-width="1"></circle><path d="M37.9 743.4V734.0A9.400 9.400 0 0 1 47.3 743.4Z" fill="#000"></path><path d="M37.9 743.4V752.8A9.400 9.400 0 0 1 28.5 743.4Z" fill="#000"></path><path d="M24.2 743.4H51.5M37.9 730.1V756.9" stroke="#000" stroke-width="1" fill="none"></path><polygon points="47.4,734.9 54.1,727.6 55.6,729.0 57.1,722.2 50.5,724.3 52.0,725.7 45.3,733.0" fill="#000"></polygon><polygon points="53.5,744.8 62.8,744.8 62.8,746.9 68.8,743.4 62.8,739.9 62.8,742.0 53.5,742.0" fill="#000"></polygon><polygon points="46.1,753.8 53.1,760.4 51.7,762.0 58.4,763.6 56.5,756.9 55.0,758.4 48.1,751.8" fill="#000"></polygon></svg></div>
<div class="b" style="left:100px;top:717px;width:91px;height:54px" id="touch"><svg style="left:0;top:0" width="89" height="52" viewBox="101 718 89 52"><defs><linearGradient id="bf" x1="0" y1="0" x2="1" y2="0"><stop offset="0" stop-color="#4f7fb0"></stop><stop offset=".6" stop-color="#8fb4d4"></stop><stop offset="1" stop-color="#d4e8f0"></stop></linearGradient><linearGradient id="scr" x1="0" y1="0" x2="1" y2="0"><stop offset="0" stop-color="#555"></stop><stop offset=".5" stop-color="#ddd"></stop><stop offset="1" stop-color="#666"></stop></linearGradient></defs><rect x="129.9" y="736.5" width="2.900" height="9.7" fill="url(#scr)"></rect><rect x="128.4" y="730.6" width="5.8" height="6.4" rx="1.500" fill="#1a1a1a"></rect><rect x="129.2" y="731.0" width="4.2" height="1.200" rx=".6" fill="#555"></rect><rect x="147.2" y="731.9" width="2.900" height="8.2" fill="url(#scr)"></rect><rect x="145.7" y="725.8" width="5.8" height="6.6" rx="1.500" fill="#1a1a1a"></rect><rect x="146.6" y="726.2" width="4.2" height="1.200" rx=".6" fill="#555"></rect><polygon points="125.4,752.5 137.6,738.9 159.4,741.2 161.4,751.1 157.4,757.1" fill="#99ccff"></polygon><polygon points="125.4,752.5 157.4,757.1 157.2,763.2 126.0,758.5" fill="url(#bf)"></polygon><polygon points="157.4,757.1 161.4,751.1 161.2,756.9 157.2,763.2" fill="#d8eaf4"></polygon><rect x="158.7" y="740.5" width="2.900" height="10.2" fill="url(#scr)"></rect><rect x="157.2" y="734.4" width="5.9" height="6.6" rx="1.500" fill="#1a1a1a"></rect><rect x="158.0" y="734.8" width="4.3" height="1.200" rx=".6" fill="#555"></rect><rect x="140.2" y="745.1" width="2.900" height="10.2" fill="url(#scr)"></rect><rect x="138.8" y="739.3" width="5.6" height="6.3" rx="1.500" fill="#1a1a1a"></rect><rect x="139.6" y="739.7" width="4.0" height="1.200" rx=".6" fill="#555"></rect></svg></div>
<div class="b" style="left:296px;top:717px;width:91px;height:54px" id="tool"><svg style="left:0;top:0" width="89" height="52" viewBox="297 718 89 52"><rect x="318" y="722" width="46" height="44" fill="url(#gq)"></rect><polygon points="337.4,722.0 346.0,722.0 347.8,733.6 335.6,733.6" fill="#f2f2f2"></polygon><path d="M337.4 722.0L335.6 733.6M346.0 722.0L347.8 733.6" stroke="#777" stroke-width=".6" fill="none"></path><rect x="333.1" y="733.2" width="17.8" height="6.5" rx="1" fill="#d8d8d8" stroke="#5a5a5a" stroke-width=".7"></rect><path d="M333.8 736.5H350.3" stroke="#7a7a7a" stroke-width="1.100"></path><rect x="336.0" y="739.7" width="11.5" height="7.6" fill="#636363"></rect><polygon points="336.4,747.2 347.1,747.2 345.8,750.7 337.9,750.7" fill="#505050"></polygon><rect x="339.5" y="750.5" width="4.1" height="1.8" fill="#f4f4f4"></rect><rect x="339.3" y="752.3" width="4.7" height="13.6" fill="#f2e21a" stroke="#8a7a10" stroke-width=".5"></rect><path d="M339.5 754.8L343.8 757.4M339.5 758.7L343.8 761.2M339.5 762.6L343.8 765.1" stroke="#b08a20" stroke-width="1.200"></path></svg></div>
<div class="b" style="left:786px;top:717px;width:91px;height:54px" id="full"><svg style="left:0;top:0" width="89" height="52" viewBox="787 718 89 52"><defs><linearGradient id="ga" x1="0" y1="0" x2="1" y2="1"><stop offset="0" stop-color="#8ed82a"></stop><stop offset="1" stop-color="#2e8a0a"></stop></linearGradient></defs><rect x="810.5" y="728.3" width="41.4" height="32.3" rx="2.200" fill="#f1f2f9" stroke="#b4b8cf" stroke-width="1"></rect><path d="M811.2 732.9V730.3Q811.2 728.9 812.6 728.9H849.9Q851.3 728.9 851.3 730.3V732.9Z" fill="#c9cbd8"></path><polygon points="813.8,734.8 820.9,735.8 819.6,737.2 824.3,741.4 821.6,744.4 816.9,740.3 815.6,741.7" fill="url(#ga)" stroke="#2a7a08" stroke-width=".4"></polygon><polygon points="848.5,734.8 846.7,741.7 845.4,740.3 840.6,744.4 837.9,741.4 842.7,737.2 841.4,735.8" fill="url(#ga)" stroke="#2a7a08" stroke-width=".4"></polygon><polygon points="813.8,757.9 815.6,751.0 816.9,752.4 821.6,748.3 824.3,751.3 819.6,755.5 820.9,757.0" fill="url(#ga)" stroke="#2a7a08" stroke-width=".4"></polygon><polygon points="848.5,757.9 841.4,757.0 842.7,755.5 837.9,751.3 840.6,748.3 845.4,752.4 846.7,751.0" fill="url(#ga)" stroke="#2a7a08" stroke-width=".4"></polygon></svg></div>
<div class="b d" style="left:884px;top:717px;width:91px;height:54px" id="exit"><svg style="left:0;top:0" width="89" height="52" viewBox="885 718 89 52"><defs><linearGradient id="dr" x1="0" y1="0" x2="1" y2="1"><stop offset="0" stop-color="#d4d9da"></stop><stop offset="1" stop-color="#b4babc"></stop></linearGradient></defs><ellipse cx="921.8" cy="765.2" rx="12" ry="1" fill="#999" opacity=".4"></ellipse><rect x="917.2" y="722.0" width="32.6" height="43.0" fill="#a9a9a9"></rect><polygon points="920.0,724.0 945.2,725.3 945.2,761.1 920.0,762.8" fill="url(#dr)"></polygon><polygon points="945.2,725.3 947.8,724.2 947.8,762.5 945.2,761.1" fill="#b0b0b0"></polygon><circle cx="942.0" cy="741.8" r="1.400" fill="#a6a6a6"></circle><polygon points="909.3,746.5 921.8,746.5 921.8,740.0 932.5,753.3 921.8,764.5 921.8,759.1 909.3,759.1" fill="#c9c2c1" stroke="#f6f5f4" stroke-width="1.600" stroke-linejoin="round"></polygon></svg></div>
</div>
</body></html>
